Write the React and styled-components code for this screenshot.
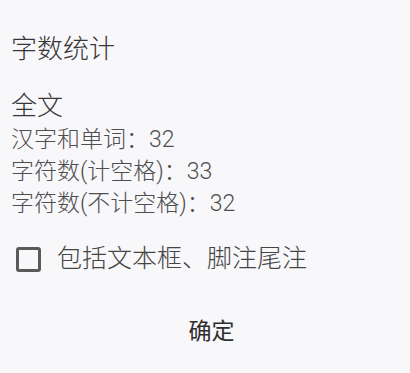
import React, { useState } from "react";
import styled, { createGlobalStyle } from "styled-components";

const Global = createGlobalStyle`
  html, body { margin: 0; padding: 0; background: #f8f7fa; }
  body { font-family: Roboto, "Noto Sans CJK SC", sans-serif; color: #404040; }
`;

const Dialog = styled.div`
  width: 410px;
  height: 373px;
  box-sizing: border-box;
  padding: 30px 0 0 11px;
  display: flex;
  flex-direction: column;
  background: #f8f7fa;
`;

const Title = styled.h1`
  margin: 0;
  font-size: 26px;
  font-weight: 300;
  line-height: 38px;
  color: #363636;
`;

const Section = styled.h2`
  margin: 20px 0 0;
  font-size: 26px;
  font-weight: 300;
  line-height: 36px;
  color: #363636;
`;

const Stats = styled.div`
  display: flex;
  flex-direction: column;
`;

const StatRow = styled.div`
  font-size: 23px;
  font-weight: 300;
  line-height: 32px;
  color: #4e4e4e;
`;

const CheckRow = styled.label`
  margin-top: 22px;
  display: flex;
  align-items: center;
  gap: 16px;
  padding-left: 5px;
  cursor: pointer;
`;

const Box = styled.span`
  width: 19px;
  height: 19px;
  border: 3px solid #5a5a5a;
  border-radius: 3px;
  box-sizing: content-box;
  display: inline-block;
  background: ${(p) => (p.$on ? "#5a5a5a" : "transparent")};
`;

const CheckText = styled.span`
  font-size: 25px;
  font-weight: 300;
  line-height: 34px;
  color: #444444;
`;

const Footer = styled.div`
  margin-top: 40px;
  display: flex;
  justify-content: center;
`;

const OkButton = styled.button`
  border: none;
  background: transparent;
  font-family: inherit;
  font-size: 23px;
  line-height: 32px;
  color: #2e2e2e;
  padding: 0 8px;
  margin-left: 2px;
`;

export default function App() {
  const [on, setOn] = useState(false);
  return (
    <>
      <Global />
      <Dialog>
        <Title>字数统计</Title>
        <Section>全文</Section>
        <Stats>
          <StatRow>汉字和单词：32</StatRow>
          <StatRow>字符数(计空格)：33</StatRow>
          <StatRow>字符数(不计空格)：32</StatRow>
        </Stats>
        <CheckRow onClick={() => setOn(!on)}>
          <Box $on={on} />
          <CheckText>包括文本框、脚注尾注</CheckText>
        </CheckRow>
        <Footer>
          <OkButton>确定</OkButton>
        </Footer>
      </Dialog>
    </>
  );
}
